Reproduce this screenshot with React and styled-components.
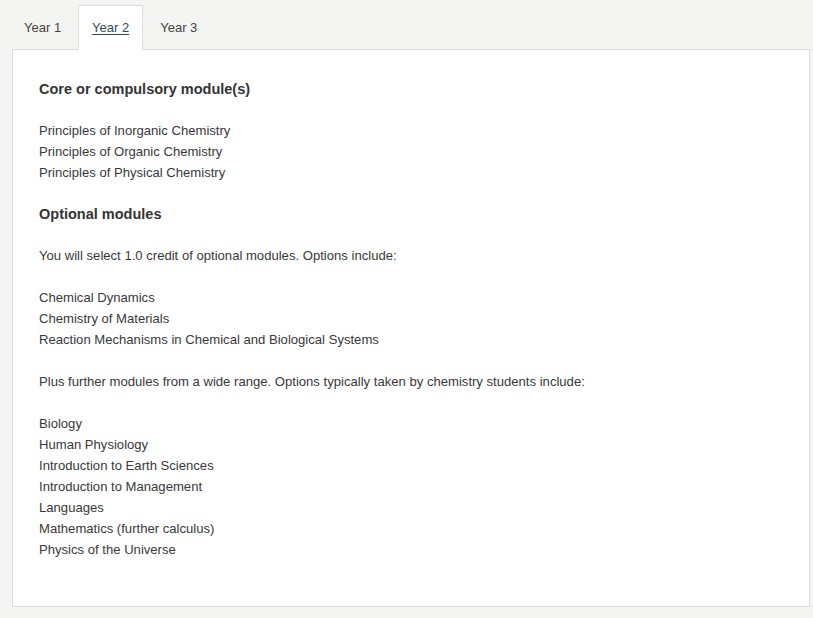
import React from "react";
import styled, { createGlobalStyle } from "styled-components";

const Global = createGlobalStyle`
  html, body { margin: 0; padding: 0; background: #f4f4f2; }
  body { font-family: "Liberation Sans", Arial, sans-serif; color: #333; }
`;

const Page = styled.div`
  padding: 5px 3px 10px 12px;
`;

const TabList = styled.div`
  display: flex;
  gap: 3px;
  margin-left: -2px;
  position: relative;
  z-index: 1;
`;

const Tab = styled.div`
  height: 43px;
  display: flex;
  align-items: center;
  padding: 0 13px;
  font-size: 13px;
  color: ${(p) => (p.$active ? "#2f4a54" : "#444")};
  border: 1px solid ${(p) => (p.$active ? "#dcdce0" : "transparent")};
  border-bottom-color: ${(p) => (p.$active ? "#fff" : "transparent")};
  background: ${(p) => (p.$active ? "#fff" : "transparent")};
  margin-bottom: -1px;
  text-decoration: ${(p) => (p.$active ? "underline" : "none")};
  text-underline-offset: 2px;
`;

const Panel = styled.div`
  background: #fff;
  border: 1px solid #d9d9de;
  padding: 29px 26px 25px;
`;

const Heading = styled.h3`
  margin: 0 0 20px;
  font-size: 14.5px;
  line-height: 21px;
  font-weight: bold;
  color: #333;
`;

const Para = styled.p`
  margin: 0 0 21px;
  font-size: 13.1px;
  line-height: 21px;
  color: #383838;
`;

const List = styled.div`
  margin: 0 0 21px;
  font-size: 13.1px;
  line-height: 21px;
  color: #383838;
`;

const Item = styled.div``;

export default function App() {
  return (
    <>
      <Global />
      <Page>
        <TabList>
          <Tab>Year 1</Tab>
          <Tab $active>Year 2</Tab>
          <Tab>Year 3</Tab>
        </TabList>
        <Panel>
          <Heading>Core or compulsory module(s)</Heading>
          <List>
            <Item>Principles of Inorganic Chemistry</Item>
            <Item>Principles of Organic Chemistry</Item>
            <Item>Principles of Physical Chemistry</Item>
          </List>
          <Heading>Optional modules</Heading>
          <Para>You will select 1.0 credit of optional modules. Options include:</Para>
          <List>
            <Item>Chemical Dynamics</Item>
            <Item>Chemistry of Materials</Item>
            <Item>Reaction Mechanisms in Chemical and Biological Systems</Item>
          </List>
          <Para>Plus further modules from a wide range. Options typically taken by chemistry students include:</Para>
          <List>
            <Item>Biology</Item>
            <Item>Human Physiology</Item>
            <Item>Introduction to Earth Sciences</Item>
            <Item>Introduction to Management</Item>
            <Item>Languages</Item>
            <Item>Mathematics (further calculus)</Item>
            <Item>Physics of the Universe</Item>
          </List>
        </Panel>
      </Page>
    </>
  );
}
